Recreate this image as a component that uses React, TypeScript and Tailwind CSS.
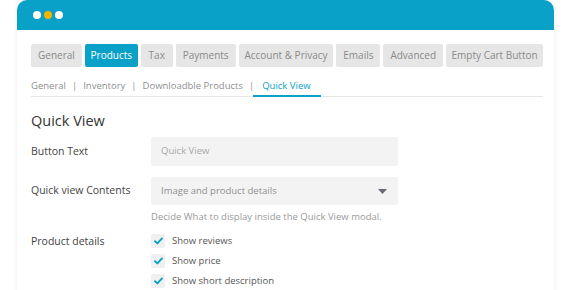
const TABS: { label: string; w: string; active?: boolean }[] = [
  { label: "General", w: "w-[51px]" },
  { label: "Products", w: "w-[53px]", active: true },
  { label: "Tax", w: "w-[32px]" },
  { label: "Payments", w: "w-[60px]" },
  { label: "Account & Privacy", w: "w-[95px]" },
  { label: "Emails", w: "w-[44px]" },
  { label: "Advanced", w: "w-[60px]" },
  { label: "Empty Cart Button", w: "w-[97px]" },
];

const SUBNAV = ["General", "Inventory", "Downloadble Products", "Quick View"];

function Check() {
  return (
    <span className="flex h-[14px] w-[14px] items-center justify-center rounded-[2px] bg-[#f0f0f0]">
      <svg width="9" height="8" viewBox="0 0 9 8" fill="none">
        <path d="M1 4.2 L3.4 6.4 L8 1.4" stroke="#0aa1c8" strokeWidth="1.9" strokeLinecap="round" strokeLinejoin="round" />
      </svg>
    </span>
  );
}

export default function App() {
  return (
    <div
      className="h-[290px] w-[570px] overflow-hidden bg-white"
      style={{ fontFamily: '"Open Sans", "Liberation Sans", sans-serif' }}
    >
      <div className="ml-[17px] w-[537px] rounded-t-[10px] bg-white shadow-[0_0_5px_rgba(0,0,0,0.09)]">
        {/* Header */}
        <div className="flex h-[30px] items-center gap-[3px] rounded-t-[10px] bg-[#0aa1c8] pl-[16px]">
          <span className="h-[8px] w-[8px] rounded-full bg-white" />
          <span className="h-[8px] w-[8px] rounded-full bg-[#f5b400]" />
          <span className="h-[8px] w-[8px] rounded-full bg-white" />
        </div>

        <div className="pl-[14px] pr-[11px] pt-[14px] pb-[20px]">
          {/* Tabs */}
          <div className="flex gap-[3px]">
            {TABS.map((t) => (
              <div
                key={t.label}
                className={`flex h-[23px] ${t.w} items-center justify-center rounded-[2px] text-[10px] ${
                  t.active ? "bg-[#0aa1c8] text-white" : "bg-[#e6e6e6] text-[#8a8a8a]"
                }`}
              >
                {t.label}
              </div>
            ))}
          </div>

          {/* Sub navigation */}
          <div className="mt-[12px] flex h-[18px] items-start border-b border-[#e6e6e6] text-[9.5px] leading-[14px] text-[#8f8f8f]">
            {SUBNAV.map((s, i) => (
              <div key={s} className="flex">
                {i > 0 && <span className="px-[6px]">|</span>}
                <span
                  className={
                    i === SUBNAV.length - 1
                      ? "-mb-[1px] ml-[-7px] h-[18px] border-b-2 border-[#0aa1c8] pl-[9px] pr-[10px] text-[#0aa1c8]"
                      : ""
                  }
                >
                  {s}
                </span>
              </div>
            ))}
          </div>

          {/* Section */}
          <h2 className="mt-[14px] text-[14.5px] leading-[20px] text-[#333]">Quick View</h2>

          <div className="mt-[6px] flex items-center">
            <span className="w-[120px] text-[10.5px] text-[#444]">Button Text</span>
            <div className="flex h-[29px] w-[247px] items-center rounded-[2px] bg-[#f3f3f3] px-[10px] text-[9.5px] text-[#a8a8a8]">
              Quick View
            </div>
          </div>

          <div className="mt-[11px] flex items-center">
            <span className="w-[120px] text-[10.5px] text-[#444]">Quick view Contents</span>
            <div className="flex h-[28px] w-[247px] items-center justify-between rounded-[2px] bg-[#f3f3f3] px-[10px] text-[9.5px] text-[#8f8f8f]">
              <span>Image and product details</span>
              <svg width="9" height="5" viewBox="0 0 9 5" className="mr-[1px]">
                <path d="M0 0 H9 L4.5 5 Z" fill="#6b6b78" />
              </svg>
            </div>
          </div>

          <p className="ml-[120px] mt-[4px] text-[9.5px] leading-[16px] text-[#9a9a9a]">
            Decide What to display inside the Quick View modal.
          </p>

          <div className="mt-[8px] flex">
            <span className="w-[120px] text-[10.5px] leading-[16px] text-[#444]">Product details</span>
            <div className="flex flex-col gap-[4px]">
              {["Show reviews", "Show price", "Show short description"].map((l) => (
                <div key={l} className="flex h-[16px] items-center gap-[7px] text-[9.5px] text-[#555]">
                  <Check />
                  <span>{l}</span>
                </div>
              ))}
            </div>
          </div>
        </div>
      </div>
    </div>
  );
}
